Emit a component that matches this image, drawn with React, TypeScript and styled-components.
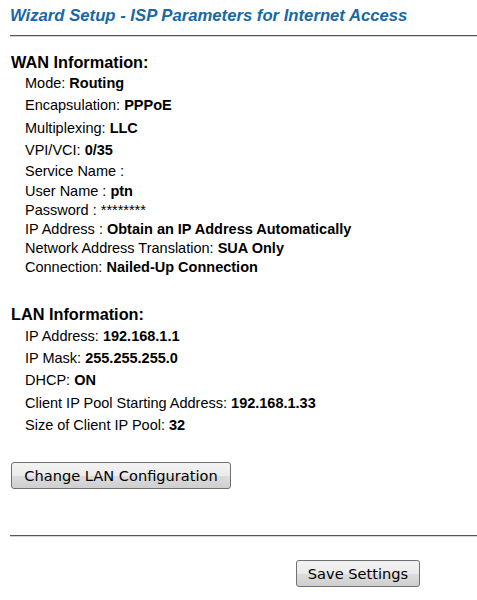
import styled, { createGlobalStyle } from "styled-components";

const GlobalStyle = createGlobalStyle`
  html, body {
    margin: 0;
    padding: 0;
    background: #ffffff;
    overflow: hidden;
  }
  body {
    font-family: "Liberation Sans", Arial, sans-serif;
    color: #000000;
  }
`;

const Page = styled.div`
  width: 477px;
  height: 600px;
  padding: 6px 0 0 10px;
  box-sizing: border-box;
`;

const Title = styled.h1`
  margin: 0;
  font-size: 16.7px;
  font-style: italic;
  font-weight: bold;
  color: #1668a6;
  line-height: 20px;
`;

const Rule = styled.div<{ $top: number }>`
  margin-top: ${(p) => p.$top}px;
  border-top: 1px solid #555555;
  border-bottom: 1px solid #d4d4d4;
  margin-right: -10px;
`;

const Section = styled.section<{ $top: number }>`
  margin-top: ${(p) => p.$top}px;
  display: flex;
  flex-direction: column;
`;

const SectionTitle = styled.h2<{ $h: number }>`
  margin: 0 0 0 1px;
  font-size: 16.3px;
  font-weight: bold;
  line-height: ${(p) => p.$h}px;
`;

const Row = styled.div<{ $h: number }>`
  height: ${(p) => p.$h}px;
  display: flex;
  align-items: center;
  padding-left: 15px;
  font-size: 14.5px;
  white-space: pre;
`;

const Value = styled.b`
  font-weight: bold;
`;

const ButtonRow = styled.div<{ $top: number; $left: number }>`
  margin-top: ${(p) => p.$top}px;
  padding-left: ${(p) => p.$left}px;
  display: flex;
`;

const Button = styled.button<{ $w: number }>`
  width: ${(p) => p.$w}px;
  height: 27px;
  padding: 0;
  border: 1px solid #707070;
  border-radius: 3px;
  background: linear-gradient(#f3f3f3 0%, #ebebeb 50%, #dddddd 51%, #cfcfcf 100%);
  font-family: "DejaVu Sans", Tahoma, sans-serif;
  font-size: 14.6px;
  color: #000000;
`;

type Item = { label: string; value?: string; h: number };

const wan: Item[] = [
  { label: "Mode: ", value: "Routing", h: 22 },
  { label: "Encapsulation: ", value: "PPPoE", h: 22 },
  { label: "Multiplexing: ", value: "LLC", h: 23 },
  { label: "VPI/VCI: ", value: "0/35", h: 22 },
  { label: "Service Name :", h: 20 },
  { label: "User Name : ", value: "ptn", h: 19 },
  { label: "Password : ********", h: 19 },
  { label: "IP Address : ", value: "Obtain an IP Address Automatically", h: 19 },
  { label: "Network Address Translation: ", value: "SUA Only", h: 19 },
  { label: "Connection: ", value: "Nailed-Up Connection", h: 20 },
];

const lan: Item[] = [
  { label: "IP Address: ", value: "192.168.1.1", h: 22 },
  { label: "IP Mask: ", value: "255.255.255.0", h: 22 },
  { label: "DHCP: ", value: "ON", h: 22 },
  { label: "Client IP Pool Starting Address: ", value: "192.168.1.33", h: 23 },
  { label: "Size of Client IP Pool: ", value: "32", h: 22 },
];

const renderRows = (items: Item[]) =>
  items.map((it) => (
    <Row key={it.label} $h={it.h}>
      {it.label}
      {it.value && <Value>{it.value}</Value>}
    </Row>
  ));

export default function App() {
  return (
    <Page>
      <GlobalStyle />
      <Title>Wizard Setup - ISP Parameters for Internet Access</Title>
      <Rule $top={9} />
      <Section $top={15}>
        <SectionTitle $h={20}>WAN Information:</SectionTitle>
        {renderRows(wan)}
      </Section>
      <Section $top={27}>
        <SectionTitle $h={21}>LAN Information:</SectionTitle>
        {renderRows(lan)}
      </Section>
      <ButtonRow $top={26} $left={1}>
        <Button $w={220}>Change LAN Configuration</Button>
      </ButtonRow>
      <Rule $top={46} />
      <ButtonRow $top={23} $left={286}>
        <Button $w={124}>Save Settings</Button>
      </ButtonRow>
    </Page>
  );
}
